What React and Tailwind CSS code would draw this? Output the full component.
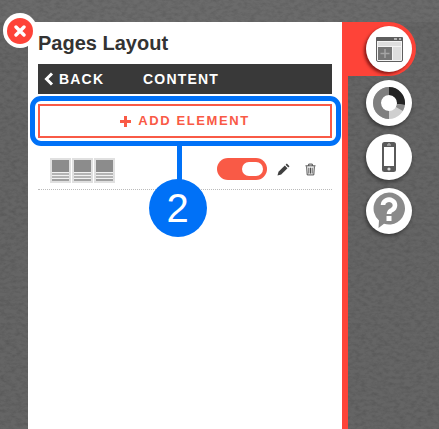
import React from "react";

const Sans = { fontFamily: '"Liberation Sans", Arial, sans-serif' };

function Thumb() {
  return (
    <div className="w-[21px] h-[25px] bg-[#e0e0e0] p-[2px]">
      <div className="h-[21px] bg-[#f2f2f2] flex flex-col">
        <div className="h-[12px] bg-[#8c8c8c]" />
        <div className="h-[2px] mt-[1px] bg-[#b4b4b4]" />
        <div className="h-[2px] mt-[1px] bg-[#b4b4b4]" />
        <div className="h-[2px] mt-[1px] bg-[#a0a0a0]" />
      </div>
    </div>
  );
}

function NavCircle({ children, active }) {
  return (
    <div
      className={
        "relative w-[46px] h-[46px] rounded-full bg-white flex items-center justify-center " +
        (active ? "shadow-[-2px_2px_3px_rgba(90,10,10,0.7)]" : "shadow-[-1px_2px_4px_rgba(0,0,0,0.45)]")
      }
    >
      {children}
    </div>
  );
}

export default function App() {
  return (
    <div className="relative w-[439px] h-[429px] overflow-hidden bg-[#656565] pl-[28px] pt-[22px] flex items-start" style={Sans}>
      {/* concrete texture */}
      <svg className="absolute inset-0" width="439" height="429">
        <filter id="concrete">
          <feTurbulence type="fractalNoise" baseFrequency="0.18 0.3" numOctaves="4" seed="7" />
          <feColorMatrix values="0 0 0 0 0  0 0 0 0 0  0 0 0 0 0  1.6 0 0 0 -0.6" />
        </filter>
        <rect width="439" height="429" filter="url(#concrete)" opacity="0.14" />
        <rect width="439" height="22" fill="#fff" opacity="0.04" />
      </svg>

      {/* white panel */}
      <div className="relative w-[314px] h-[407px] bg-white px-[10px] shrink-0 flex flex-col">
        <div className="h-[42px] pt-[9px] text-[20px] leading-[24px] font-bold text-[#333]">Pages Layout</div>
        <div className="h-[30px] bg-[#393939] flex items-center text-white text-[14px] font-bold tracking-[1.2px]">
          <svg width="12" height="14" viewBox="0 0 12 14" className="ml-[5px]">
            <path d="M9 1.5 L3.5 7 L9 12.5" fill="none" stroke="#fff" strokeWidth="3" />
          </svg>
          <span className="ml-[4px] w-[84px]">BACK</span>
          <span>CONTENT</span>
        </div>
        <div className="mt-[10px] h-[34px] border-2 border-[#f95a46] flex items-center justify-center text-[#f95a46] text-[13px] font-bold tracking-[1.6px]">
          <svg width="11" height="11" viewBox="0 0 11 11" className="mr-[7px]">
            <path d="M5.5 0 V11 M0 5.5 H11" stroke="#f95a46" strokeWidth="3" />
          </svg>
          ADD ELEMENT
        </div>
        <div className="mt-[18px] h-[34px] pt-[2px] pl-[12px] pr-[16px] flex items-start border-b border-dotted border-[#bbb]">
          <div className="flex gap-[1px]">
            <Thumb /><Thumb /><Thumb />
          </div>
          <div className="ml-auto flex items-center">
            <div className="w-[50px] h-[22px] rounded-full bg-[#f95a46] flex items-center justify-end pr-[4px]">
              <div className="w-[21px] h-[14px] rounded-full bg-white" />
            </div>
            <svg width="13" height="13" viewBox="0 0 13 13" className="ml-[10px]">
              <path d="M0.5 12.5 L1.5 8.8 L7.8 2.5 L10.5 5.2 L4.2 11.5 Z" fill="#3f3f3f" />
              <path d="M8.6 1.7 L9.8 0.5 L12.5 3.2 L11.3 4.4 Z" fill="#3f3f3f" />
            </svg>
            <svg width="11" height="13" viewBox="0 0 12 13" className="ml-[15px]">
              <path d="M0.5 2.5 H11.5 M4 2.5 V0.6 H8 V2.5 M1.8 3 L2.4 12.4 H9.6 L10.2 3 M4.2 4.5 V11 M6 4.5 V11 M7.8 4.5 V11" fill="none" stroke="#3f3f3f" strokeWidth="1" />
            </svg>
          </div>
        </div>
      </div>

      {/* red side rail */}
      <div className="relative w-[6px] h-[407px] shrink-0 bg-[#fe4338]" />
      <div className="absolute left-[342px] top-[22px] w-[74px] h-[54px] bg-[#fe4338] rounded-r-[27px]" />

      {/* nav circles */}
      <div className="absolute left-[366px] top-[26px] flex flex-col gap-[8px]">
        <NavCircle active>
          <svg width="27" height="25" viewBox="0 0 27 25">
            <rect x="0.5" y="0.5" width="26" height="24" rx="1.5" fill="#f4f4f4" stroke="#5e5e5e" />
            <rect x="0" y="0" width="27" height="4" rx="1" fill="#5e5e5e" />
            <path d="M18 2 H21 M23 2 H25" stroke="#ccc" strokeWidth="1.5" />
            <rect x="2" y="5" width="23" height="4" fill="#dedede" />
            <rect x="2" y="10" width="14" height="13" fill="#767676" />
            <rect x="17" y="10" width="8" height="13" fill="#dedede" />
            <path d="M9 12 V21 M4.5 16.5 H13.5" stroke="#a4a4a4" strokeWidth="1.5" />
          </svg>
        </NavCircle>
        <NavCircle>
          <svg width="32" height="32" viewBox="0 0 32 32">
            <circle cx="16" cy="16" r="12" fill="none" stroke="#cfcfcf" strokeWidth="8" />
            <path d="M16 4 A12 12 0 0 1 27.9 17.5" fill="none" stroke="#242424" strokeWidth="8" />
            <path d="M27.9 17.5 A12 12 0 0 1 26.4 22" fill="none" stroke="#8a8a8a" strokeWidth="8" />
            <path d="M16 28 A12 12 0 0 1 16 4" fill="none" stroke="#7f7f7f" strokeWidth="8" />
          </svg>
        </NavCircle>
        <NavCircle>
          <svg width="14" height="30" viewBox="0 0 14 30">
            <rect x="0" y="0" width="14" height="30" rx="2.5" fill="#5a5a5a" />
            <rect x="2" y="5" width="10" height="19" fill="#fff" />
            <circle cx="7" cy="27" r="1.6" fill="#ddd" />
            <rect x="5" y="2.5" width="4" height="1" fill="#ccc" />
            <rect x="6.5" y="1" width="1" height="1.5" fill="#ccc" />
          </svg>
        </NavCircle>
        <NavCircle>
          <svg width="34" height="38" viewBox="0 0 34 38">
            <path d="M17 0.5 A16 16 0 1 1 12 31.7 L6.5 36 L7 28.5 A16 16 0 0 1 17 0.5 Z" fill="#8a8a8a" />
            <path d="M11 13 A6 5.5 0 1 1 20 18 Q17 19.3 17 22" fill="none" stroke="#fff" strokeWidth="4.6" />
            <rect x="14.5" y="24" width="5" height="5" fill="#fff" />
          </svg>
        </NavCircle>
      </div>

      {/* close button */}
      <div className="absolute left-[3px] top-[13px] w-[34px] h-[35px] rounded-full bg-white flex items-center justify-center">
        <div className="w-[26px] h-[26px] rounded-full bg-[#fe4338] flex items-center justify-center">
          <svg width="12" height="12" viewBox="0 0 12 12">
            <path d="M2 2 L10 10 M10 2 L2 10" stroke="#fff" strokeWidth="3.4" strokeLinecap="round" />
          </svg>
        </div>
      </div>

      {/* callout */}
      <div className="absolute left-[30px] top-[96px] w-[311px] h-[50px] rounded-[11px] border-[5px] border-[#0071f7]" />
      <div className="absolute left-[177px] top-[146px] w-[5px] h-[40px] bg-[#0071f7]" />
      <div className="absolute left-[149px] top-[179px] w-[58px] h-[58px] rounded-full bg-[#0071f7] flex items-center justify-center text-white text-[40px] leading-none pr-[1px]">2</div>
    </div>
  );
}
